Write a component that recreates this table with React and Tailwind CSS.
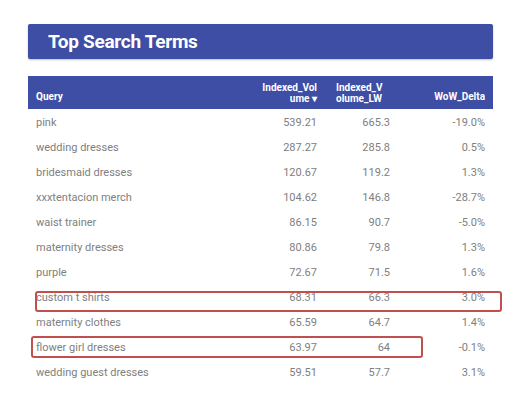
import React from "react";

const rows = [
  ["pink", "539.21", "665.3", "-19.0%"],
  ["wedding dresses", "287.27", "285.8", "0.5%"],
  ["bridesmaid dresses", "120.67", "119.2", "1.3%"],
  ["xxxtentacion merch", "104.62", "146.8", "-28.7%"],
  ["waist trainer", "86.15", "90.7", "-5.0%"],
  ["maternity dresses", "80.86", "79.8", "1.3%"],
  ["purple", "72.67", "71.5", "1.6%"],
  ["custom t shirts", "68.31", "66.3", "3.0%"],
  ["maternity clothes", "65.59", "64.7", "1.4%"],
  ["flower girl dresses", "63.97", "64", "-0.1%"],
  ["wedding guest dresses", "59.51", "57.7", "3.1%"],
];

const App = () => {
  return (
    <div className="relative w-[528px] h-[402px] bg-white overflow-hidden font-['Roboto',sans-serif]">
      <div className="pt-6 pl-[28px] w-[493px]">
        <div className="h-[35px] bg-[#3e4ea4] rounded-[2px] shadow-[0_1px_2px_rgba(0,0,0,0.25)] flex items-center pl-5">
          <h1 className="text-white text-[19px] font-bold tracking-[-0.3px] leading-none">Top Search Terms</h1>
        </div>

        <div className="mt-[17px]">
          <div className="grid grid-cols-[217px_77px_73px_98px] h-[33px] bg-[#3e4ea4] text-white text-[10px] font-bold leading-[11px] items-center">
            <div className="pl-[8px] pt-[8px]">Query</div>
            <div className="text-right pr-[5px]">Indexed_Vol<br />ume ▾</div>
            <div className="pl-[14px]">Indexed_V<br />olume_LW</div>
            <div className="text-right pr-[8px] pt-[8px]">WoW_Delta</div>
          </div>
          <div className="pt-[2px]">
            {rows.map((r) => (
              <div key={r[0]} className="grid grid-cols-[217px_77px_73px_98px] h-[25px] items-center text-[11px] text-[#808080]">
                <div className="pl-[8px]">{r[0]}</div>
                <div className="text-right pr-[5px]">{r[1]}</div>
                <div className="text-right pr-[5px]">{r[2]}</div>
                <div className="text-right pr-[8px]">{r[3]}</div>
              </div>
            ))}
          </div>
        </div>
      </div>

      {/* highlight boxes */}
      <div className="absolute left-[35px] top-[291px] w-[467px] h-[21px] border-2 border-[#c0504d] rounded-[3px]" />
      <div className="absolute left-[31px] top-[336px] w-[392px] h-[22px] border-2 border-[#c0504d] rounded-[3px]" />
    </div>
  );
};

export default App;
